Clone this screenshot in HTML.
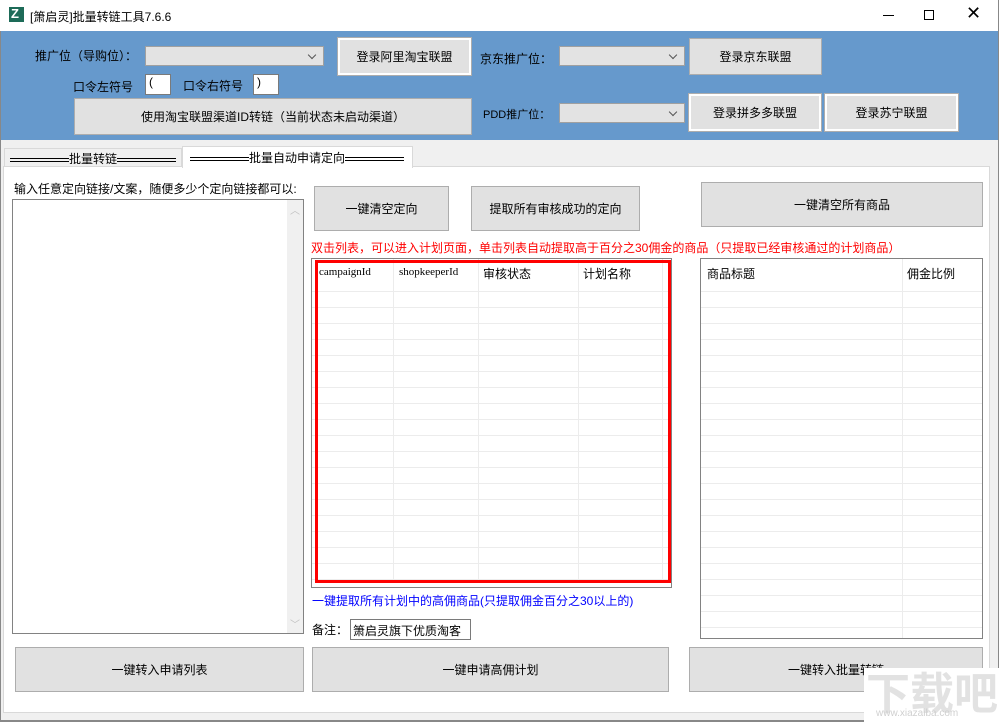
<!DOCTYPE html>
<html><head><meta charset="utf-8"><style>
*{margin:0;padding:0;box-sizing:border-box}
body{width:999px;height:722px;position:relative;overflow:hidden;background:#f0f0f0;font-family:"Liberation Sans","Noto Sans CJK SC","WenQuanYi Zen Hei",sans-serif;font-size:12px;color:#000}
.a{position:absolute}
.btn{position:absolute;background:#e1e1e1;border:1px solid #adadad;display:flex;align-items:center;justify-content:center;font-size:12px}
.btnw{border:2px solid #fff;outline:1px solid #adadad}
.cb{position:absolute;background:#e3e3e3;border:1px solid #a0a0a0}
.cb:after{content:"";position:absolute;right:8px;top:5px;width:5px;height:5px;border-right:1px solid #555;border-bottom:1px solid #555;transform:rotate(45deg)}
.t{position:absolute;white-space:nowrap}
.in{position:absolute;background:#fff;border:1px solid #7a7a7a}
.dl{display:inline-block;vertical-align:middle;height:4px;border-top:1px solid #000;border-bottom:1px solid #000}
</style></head><body>
<div class="a" style="left:0;top:0;width:999px;height:31px;background:#fff"></div>
<div class="a" style="left:9px;top:7px;width:15px;height:15px;background:#1d6b58"></div>
<div class="t" style="left:11px;top:6px;color:#fff;font-weight:bold;font-size:13px">Z</div>
<div class="t" style="left:30px;top:8px;font-size:12px">[箫启灵]批量转链工具7.6.6</div>
<div class="a" style="left:883px;top:15px;width:11px;height:1px;background:#000"></div>
<div class="a" style="left:924px;top:10px;width:10px;height:10px;border:1px solid #000"></div>
<div class="t" style="left:966px;top:3px;font-size:18px;font-weight:300">✕</div>

<div class="a" style="left:0;top:31px;width:999px;height:109px;background:#6699cc"></div>
<div class="t" style="left:35px;top:47px">推广位（导购位）：</div>
<div class="cb" style="left:145px;top:46px;width:179px;height:20px"></div>
<div class="btn btnw" style="left:338px;top:38px;width:133px;height:37px">登录阿里淘宝联盟</div>
<div class="t" style="left:73px;top:78px">口令左符号</div>
<div class="in" style="left:145px;top:74px;width:26px;height:21px;padding-left:3px">(</div>
<div class="t" style="left:183px;top:77px">口令右符号</div>
<div class="in" style="left:253px;top:74px;width:26px;height:21px;padding-left:3px">)</div>
<div class="btn" style="left:74px;top:98px;width:398px;height:37px">使用淘宝联盟渠道ID转链（当前状态未启动渠道）</div>
<div class="t" style="left:480px;top:50px">京东推广位：</div>
<div class="cb" style="left:559px;top:46px;width:126px;height:20px"></div>
<div class="btn" style="left:689px;top:38px;width:133px;height:37px">登录京东联盟</div>
<div class="t" style="left:483px;top:106px;font-size:11px">PDD推广位：</div>
<div class="cb" style="left:559px;top:103px;width:126px;height:20px"></div>
<div class="btn btnw" style="left:689px;top:94px;width:132px;height:37px">登录拼多多联盟</div>
<div class="btn btnw" style="left:825px;top:94px;width:133px;height:37px">登录苏宁联盟</div>

<div class="a" style="left:4px;top:148px;width:178px;height:19px;border:1px solid #d9d9d9;background:#f0f0f0"></div>
<div class="t" style="left:10px;top:150px"><span class="dl" style="width:59px"></span>批量转链<span class="dl" style="width:59px"></span></div>
<div class="a" style="left:3px;top:166px;width:987px;height:547px;background:#fff;border:1px solid #d9d9d9"></div>
<div class="a" style="left:182px;top:146px;width:231px;height:22px;background:#fff;border:1px solid #d9d9d9;border-bottom:none"></div>
<div class="t" style="left:190px;top:149px"><span class="dl" style="width:59px"></span>批量自动申请定向<span class="dl" style="width:59px"></span></div>

<div class="t" style="left:14px;top:180px">输入任意定向链接/文案，随便多少个定向链接都可以:</div>
<div class="a" style="left:12px;top:199px;width:292px;height:435px;border:1px solid #828282;background:#fff"></div>
<div class="a" style="left:287px;top:200px;width:16px;height:433px;background:#f0f0f0"></div>
<div class="t" style="left:290px;top:202px;color:#c0c0c0;font-size:10px">︿</div>
<div class="t" style="left:290px;top:616px;color:#c0c0c0;font-size:10px">﹀</div>

<div class="btn" style="left:314px;top:186px;width:135px;height:45px">一键清空定向</div>
<div class="btn" style="left:471px;top:186px;width:169px;height:45px">提取所有审核成功的定向</div>
<div class="btn" style="left:701px;top:182px;width:282px;height:45px">一键清空所有商品</div>
<div class="t" style="left:311px;top:239px;color:#f00">双击列表，可以进入计划页面，单击列表自动提取高于百分之30佣金的商品（只提取已经审核通过的计划商品）</div>

<div class="a" style="left:311px;top:258px;width:361px;height:330px;border:1px solid #828282;background:#fff;
background-image:linear-gradient(#ececec 1px,transparent 1px);background-size:100% 16px;background-position:0 32px"></div>
<div class="a" style="left:312px;top:259px;width:359px;height:30px;background:#fff"></div>
<div class="a" style="left:393px;top:259px;width:1px;height:324px;background:#ececec"></div>
<div class="a" style="left:478px;top:259px;width:1px;height:324px;background:#ececec"></div>
<div class="a" style="left:578px;top:259px;width:1px;height:324px;background:#ececec"></div>
<div class="a" style="left:662px;top:259px;width:1px;height:324px;background:#ececec"></div>
<div class="t" style="left:319px;top:266px;font-family:'Liberation Serif',serif;font-size:11px">campaignId</div>
<div class="t" style="left:399px;top:266px;font-family:'Liberation Serif',serif;font-size:11px">shopkeeperId</div>
<div class="t" style="left:483px;top:265px">审核状态</div>
<div class="t" style="left:583px;top:265px">计划名称</div>
<div class="a" style="left:315px;top:260px;width:356px;height:323px;border:3px solid #f00"></div>

<div class="a" style="left:700px;top:258px;width:283px;height:381px;border:1px solid #828282;background:#fff;
background-image:linear-gradient(#ececec 1px,transparent 1px);background-size:100% 16px;background-position:0 32px"></div>
<div class="a" style="left:701px;top:259px;width:281px;height:30px;background:#fff"></div>
<div class="a" style="left:902px;top:259px;width:1px;height:379px;background:#ececec"></div>
<div class="t" style="left:707px;top:265px">商品标题</div>
<div class="t" style="left:907px;top:265px">佣金比例</div>

<div class="t" style="left:312px;top:592px;color:#0000ff">一键提取所有计划中的高佣商品(只提取佣金百分之30以上的)</div>
<div class="t" style="left:312px;top:621px">备注：</div>
<div class="in" style="left:350px;top:619px;width:121px;height:21px;padding:2px 0 0 2px">箫启灵旗下优质淘客</div>

<div class="btn" style="left:15px;top:647px;width:289px;height:45px">一键转入申请列表</div>
<div class="btn" style="left:312px;top:647px;width:357px;height:45px">一键申请高佣计划</div>
<div class="btn" style="left:689px;top:647px;width:294px;height:45px">一键转入批量转链</div>
<div class="a" style="left:0;top:720px;width:999px;height:2px;background:#888"></div>
<div class="a" style="left:0;top:31px;width:1px;height:691px;background:#888"></div>
<div class="a" style="left:998px;top:0;width:1px;height:722px;background:#888"></div>
<div class="a" style="left:864px;top:668px;width:135px;height:54px;background:#fff"></div>
<div class="t" style="left:866px;top:658px;font-size:44px;color:#e2e2e2;font-weight:bold">下载吧</div>
<div class="t" style="left:876px;top:708px;font-size:10px;color:#d0d0d0">www.xiazaiba.com</div>
</body></html>
